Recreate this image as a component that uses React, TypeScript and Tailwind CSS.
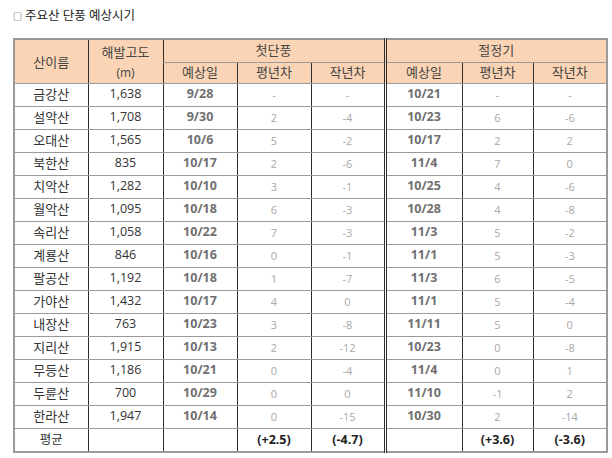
import React from "react";

type Row = [string, string, string, string, string, string, string, string];

const rows: Row[] = [
  ["금강산", "1,638", "9/28", "-", "-", "10/21", "-", "-"],
  ["설악산", "1,708", "9/30", "2", "-4", "10/23", "6", "-6"],
  ["오대산", "1,565", "10/6", "5", "-2", "10/17", "2", "2"],
  ["북한산", "835", "10/17", "2", "-6", "11/4", "7", "0"],
  ["치악산", "1,282", "10/10", "3", "-1", "10/25", "4", "-6"],
  ["월악산", "1,095", "10/18", "6", "-3", "10/28", "4", "-8"],
  ["속리산", "1,058", "10/22", "7", "-3", "11/3", "5", "-2"],
  ["계룡산", "846", "10/16", "0", "-1", "11/1", "5", "-3"],
  ["팔공산", "1,192", "10/18", "1", "-7", "11/3", "6", "-5"],
  ["가야산", "1,432", "10/17", "4", "0", "11/1", "5", "-4"],
  ["내장산", "763", "10/23", "3", "-8", "11/11", "5", "0"],
  ["지리산", "1,915", "10/13", "2", "-12", "10/23", "0", "-8"],
  ["무등산", "1,186", "10/21", "0", "-4", "11/4", "0", "1"],
  ["두륜산", "700", "10/29", "0", "0", "11/10", "-1", "2"],
  ["한라산", "1,947", "10/14", "0", "-15", "10/30", "2", "-14"],
];

const font = { fontFamily: '"Open Sans", "Noto Sans CJK KR", sans-serif' };

export default function App() {
  const hv = "border-l border-r border-l-[#2e2e2e] border-r-[#2e2e2e]";
  const hh = "border-t border-b border-t-[#9a9a9a] border-b-[#9a9a9a]";
  const base = `${hv} ${hh} text-center p-0 leading-none`;
  const dbl = "border-r-[3px] border-r-[#2e2e2e] border-double";
  return (
    <div className="w-[612px] h-[458px] bg-white pl-[13px] pt-[7px]" style={font}>
      <div className="h-[31px] text-[12.5px] text-[#222] flex items-start pt-[1px]">
        <span className="text-[9px] mr-[3px] mt-[4px] leading-none">□</span>
        <span className="leading-[16px]">주요산 단풍 예상시기</span>
      </div>
      <table className="table-fixed border-collapse w-[593px] border-2 border-[#9a9a9a]">
        <colgroup>
          <col className="w-[74px]" />
          <col className="w-[75px]" />
          <col className="w-[74px]" />
          <col className="w-[74px]" />
          <col className="w-[74px]" />
          <col className="w-[77px]" />
          <col className="w-[71px]" />
          <col className="w-[74px]" />
        </colgroup>
        <thead>
          <tr className="h-[23px] bg-[#fbd4b5] text-[13px] text-[#444]">
            <td rowSpan={2} className={`${base} pt-[2px]`}>산이름</td>
            <td className={`${base} border-b-0 align-top pt-[6px]`}>해발고도</td>
            <td colSpan={3} className={`${base} ${dbl}`}>첫단풍</td>
            <td colSpan={3} className={`${base}`}>절정기</td>
          </tr>
          <tr className="h-[21px] bg-[#fbd4b5] text-[13px] text-[#444]">
            <td className={`${base} border-t-0 text-[12px] align-bottom pb-[4px]`}>(m)</td>
            <td className={base}>예상일</td>
            <td className={base}>평년차</td>
            <td className={`${base} ${dbl}`}>작년차</td>
            <td className={base}>예상일</td>
            <td className={base}>평년차</td>
            <td className={base}>작년차</td>
          </tr>
        </thead>
        <tbody>
          {rows.map((r) => (
            <tr key={r[0]} className="h-[23px]">
              <td className={`${base} text-[13px] text-[#333]`}>{r[0]}</td>
              <td className={`${base} text-[12.5px] text-[#333]`}>{r[1]}</td>
              <td className={`${base} text-[12.5px] font-bold text-[#707070]`}>{r[2]}</td>
              <td className={`${base} text-[11px] text-[#a8a8a8]`}>{r[3]}</td>
              <td className={`${base} ${dbl} text-[11px] text-[#a8a8a8]`}>{r[4]}</td>
              <td className={`${base} text-[12.5px] font-bold text-[#707070]`}>{r[5]}</td>
              <td className={`${base} text-[11px] text-[#a8a8a8]`}>{r[6]}</td>
              <td className={`${base} text-[11px] text-[#a8a8a8]`}>{r[7]}</td>
            </tr>
          ))}
          <tr className="h-[24px]">
            <td className={`${base} border-t-[#222] text-[12.5px] text-[#333]`}>평균</td>
            <td className={`${base} border-t-[#222]`}></td>
            <td className={`${base} border-t-[#222]`}></td>
            <td className={`${base} border-t-[#222] text-[12.5px] font-bold text-[#222]`}>(+2.5)</td>
            <td className={`${base} ${dbl} border-t-[#222] text-[12.5px] font-bold text-[#222]`}>(-4.7)</td>
            <td className={`${base} border-t-[#222]`}></td>
            <td className={`${base} border-t-[#222] text-[12.5px] font-bold text-[#222]`}>(+3.6)</td>
            <td className={`${base} border-t-[#222] text-[12.5px] font-bold text-[#222]`}>(-3.6)</td>
          </tr>
        </tbody>
      </table>
    </div>
  );
}
